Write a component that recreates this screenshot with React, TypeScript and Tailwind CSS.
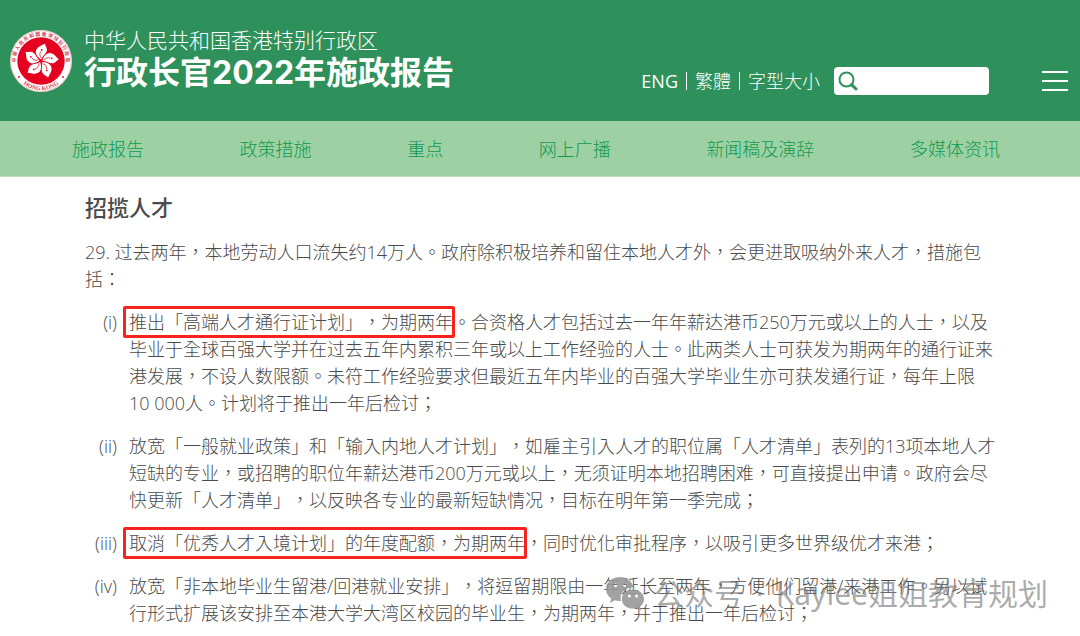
import type { ReactNode } from "react";

const navItems = ["施政报告", "政策措施", "重点", "网上广播", "新闻稿及演辞", "多媒体资讯"];

function Emblem() {
  return (
    <svg viewBox="-32 -32 64 64" className="size-16 shrink-0" role="img" aria-label="香港特别行政区区徽">
      <defs>
        <path id="ring-top" d="M-19 16.6 A25.2 25.2 0 1 1 19 16.6" />
        <path id="ring-bottom" d="M-26.5 12 A29.1 29.1 0 0 0 26.5 12" />
        <g id="petal">
          <path
            d="M0 -1.5 C-4 -3 -7.8 -7 -6 -11 C-5 -14.4 -1.5 -15.4 1.6 -18 C1.6 -15.8 4.2 -14.6 4.3 -11.4 C4.4 -8 1.2 -6 0 -1.5Z"
            fill="#fff"
          />
          <path d="M0 -3 C-2.4 -5 -2.6 -7.5 -1.2 -9.6" fill="none" stroke="#e6001f" strokeWidth="0.7" />
          <circle cx="-0.8" cy="-11" r="0.9" fill="#e6001f" />
        </g>
      </defs>
      <circle r="31" fill="#fff" />
      <circle r="30.3" fill="none" stroke="#e6001f" strokeOpacity="0.5" strokeWidth="0.5" />
      <circle r="23.7" fill="#e6001f" />
      {[8, 80, 152, 224, 296].map((deg) => (
        <use key={deg} href="#petal" transform={`rotate(${deg})`} />
      ))}
      <text fill="#d5475a" fontSize="4.8" fontWeight="700" textAnchor="middle" className="font-['Noto_Sans_CJK_TC',sans-serif]">
        <textPath href="#ring-top" startOffset="50%">中 華 人 民 共 和 國 香 港 特 別 行 政 區</textPath>
      </text>
      <text fill="#d5475a" fontSize="6" fontWeight="700" textAnchor="middle" className="font-['Liberation_Serif',serif]">
        <textPath href="#ring-bottom" startOffset="50%">HONG KONG</textPath>
      </text>
      <circle cx="-22" cy="16" r="0.9" fill="#e6001f" />
      <circle cx="22" cy="16" r="0.9" fill="#e6001f" />
    </svg>
  );
}

function Marked({ children }: { children: ReactNode }) {
  return (
    <mark className="relative bg-transparent text-inherit">
      {children}
      <span className="pointer-events-none absolute -inset-y-1 -right-0.5 -left-1.5 rounded-xs border-3 border-[#f8231c]" />
    </mark>
  );
}

const measures = [
  {
    no: "(i)",
    body: (
      <>
        <Marked>推出「高端人才通行证计划」，为期两年</Marked>
        。合资格人才包括过去一年年薪达港币250万元或以上的人士，以及毕业于全球百强大学并在过去五年内累积三年或以上工作经验的人士。此两类人士可获发为期两年的通行证来港发展，不设人数限额。未符工作经验要求但最近五年内毕业的百强大学毕业生亦可获发通行证，每年上限10&nbsp;000人。计划将于推出一年后检讨；
      </>
    ),
  },
  {
    no: "(ii)",
    body: "放宽「一般就业政策」和「输入内地人才计划」，如雇主引入人才的职位属「人才清单」表列的13项本地人才短缺的专业，或招聘的职位年薪达港币200万元或以上，无须证明本地招聘困难，可直接提出申请。政府会尽快更新「人才清单」，以反映各专业的最新短缺情况，目标在明年第一季完成；",
  },
  {
    no: "(iii)",
    body: (
      <>
        <Marked>取消「优秀人才入境计划」的年度配额，为期两年</Marked>
        ，同时优化审批程序，以吸引更多世界级优才来港；
      </>
    ),
  },
  {
    no: "(iv)",
    body: "放宽「非本地毕业生留港/回港就业安排」，将逗留期限由一年延长至两年，方便他们留港/来港工作。另以试行形式扩展该安排至本港大学大湾区校园的毕业生，为期两年，并于推出一年后检讨；",
  },
];

function Header() {
  return (
    <header className="flex items-center justify-between bg-[#2e915b] pt-[27px] pr-3 pb-[26px] pl-[9px] text-white">
      <a href="#home" className="flex items-center gap-[11px]">
        <Emblem />
        <span className="flex flex-col">
          <span className="text-[21px] leading-6 font-light">中华人民共和国香港特别行政区</span>
          <span className="font-['Inter','Noto_Sans_CJK_SC',sans-serif] text-[32px] leading-[42px] font-bold">行政长官2022年施政报告</span>
        </span>
      </a>
      <div className="mt-10 flex items-center text-lg leading-7 font-light">
        <a href="#eng" className="font-normal">ENG</a>
        <span className="mx-2 h-[18px] w-px bg-white" />
        <a href="#tc">繁體</a>
        <span className="mx-2 h-[18px] w-px bg-white" />
        <button type="button" className="font-light">字型大小</button>
        <form role="search" className="ml-3.5 flex h-7 w-[155px] items-center rounded bg-white px-1">
          <button type="submit" aria-label="搜寻">
            <svg viewBox="0 0 20 20" className="size-5" fill="none" stroke="#2e915b">
              <circle cx="8.5" cy="8.5" r="7" strokeWidth="2" />
              <path d="M13.6 13.6 L18 18" strokeWidth="3" strokeLinecap="round" />
            </svg>
          </button>
          <input type="search" aria-label="搜寻" className="w-full min-w-0 px-1 text-sm text-gray-700 outline-none" />
        </form>
        <button type="button" aria-label="选单" className="ml-[53px] flex w-[26px] flex-col gap-[7px]">
          <span className="h-0.5 bg-white" />
          <span className="h-0.5 bg-white" />
          <span className="h-0.5 bg-white" />
        </button>
      </div>
    </header>
  );
}

function Watermark() {
  return (
    <div className="pointer-events-none absolute right-8 bottom-6 flex items-center gap-2.5 text-[30px] leading-9 text-neutral-500/60">
      <svg viewBox="0 0 38 34" className="h-[34px] w-[38px] opacity-90">
        <path
          d="M14 0 C6 0 0 5.2 0 12 C0 16 2 19.4 5.2 21.6 L4 26 L9 23.3 C11 24 13 24.2 15 24 C13 17 18.6 10.6 27.4 10.6 C26.4 4.4 20.8 0 14 0Z M9.4 6.4 a1.8 1.8 0 1 1 0 3.6 a1.8 1.8 0 1 1 0 -3.6Z M18.6 6.4 a1.8 1.8 0 1 1 0 3.6 a1.8 1.8 0 1 1 0 -3.6Z"
          fill="#999"
          fillRule="evenodd"
        />
        <path
          d="M27 12.6 C20.6 12.6 15.8 16.8 15.8 22.2 C15.8 27.6 20.6 31.6 27 31.6 C28.4 31.6 29.8 31.4 31 31 L35 33.4 L34 29.6 C36.6 27.8 38 25.2 38 22.2 C38 16.8 33.2 12.6 27 12.6Z M23.4 17.6 a1.5 1.5 0 1 1 0 3 a1.5 1.5 0 1 1 0 -3Z M30.6 17.6 a1.5 1.5 0 1 1 0 3 a1.5 1.5 0 1 1 0 -3Z"
          fill="#999"
          fillRule="evenodd"
        />
      </svg>
      <span className="font-['Noto_Sans','Noto_Sans_CJK_SC',sans-serif] whitespace-nowrap">
        公众号 <span className="mx-1">·</span> Kaylee姐姐教育规划
      </span>
    </div>
  );
}

export default function App() {
  return (
    <div className="relative min-h-screen overflow-hidden bg-white font-['Open_Sans','Noto_Sans_CJK_TC',sans-serif] [text-spacing-trim:space-all]">
      <Header />
      <nav className="flex justify-between border-b border-[#b9dfbd] bg-[#9dd1a4] pt-[15px] pr-20 pb-[13px] pl-18 text-lg leading-[27px] font-light text-[#0f9a50]">
        {navItems.map((item) => (
          <a key={item} href={`#${item}`}>
            {item}
          </a>
        ))}
      </nav>
      <main className="pt-3.5 pr-20 pl-[85px] text-lg leading-[27px] font-light text-[#4a4a4a]">
        <h1 className="mb-4 text-[22px] leading-8 font-medium">招揽人才</h1>
        <p className="mb-4">
          29. 过去两年，本地劳动人口流失约14万人。政府除积极培养和留住本地人才外，会更进取吸纳外来人才，措施包括：
        </p>
        <ol className="flex flex-col gap-4">
          {measures.map(({ no, body }) => (
            <li key={no} className="flex gap-3">
              <span className="w-8 shrink-0 text-right whitespace-nowrap">{no}</span>
              <div className="min-w-0 flex-1">{body}</div>
            </li>
          ))}
        </ol>
      </main>
      <Watermark />
    </div>
  );
}
